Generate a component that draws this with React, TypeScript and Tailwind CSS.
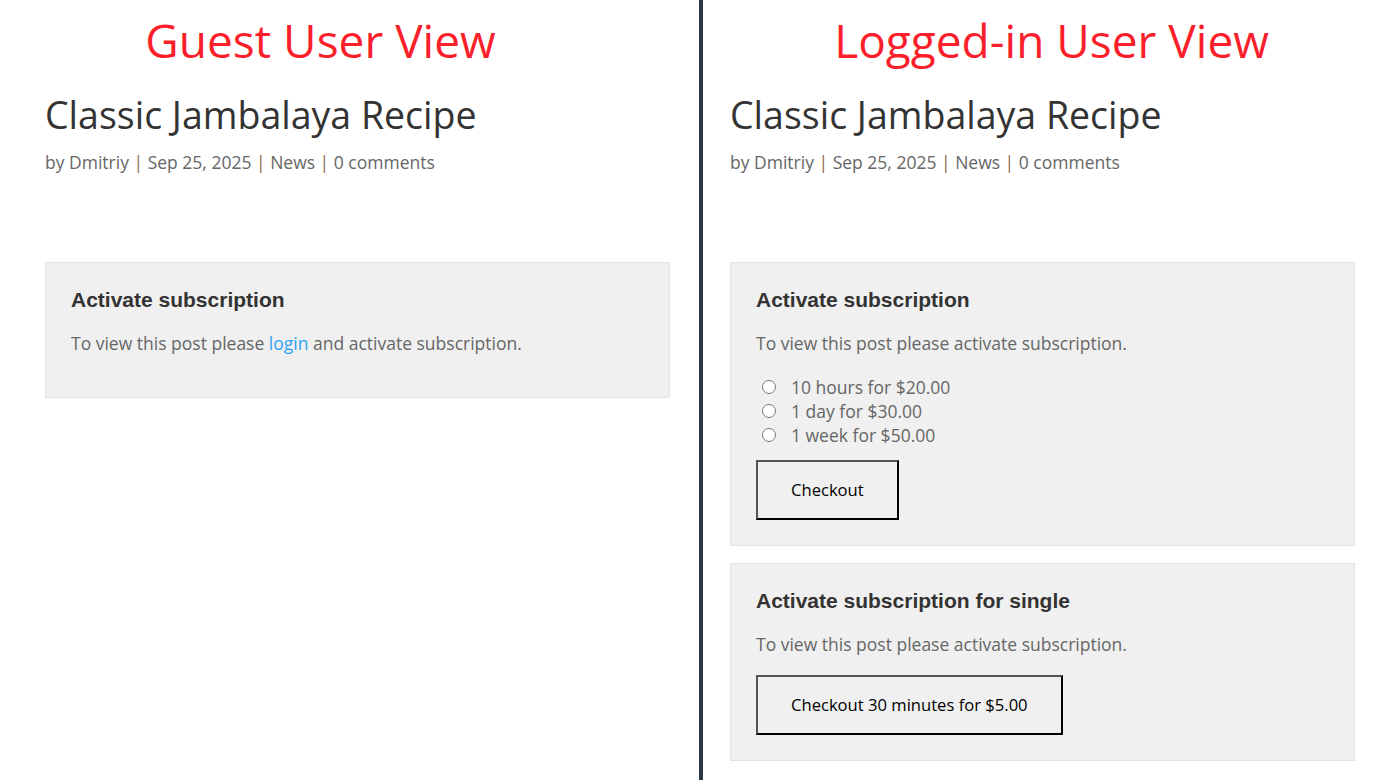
import type {ReactNode} from 'react';

const sans = "font-['Open_Sans',sans-serif]";
const arial = "font-['Liberation_Sans',Arial,sans-serif]";

function PostHeader() {
  return (
    <div>
      <h1 className={`${sans} mt-[18px] text-[37.5px] leading-[54px] font-normal text-[#333]`}>Classic Jambalaya Recipe</h1>
      <p className={`${sans} mt-[7px] text-[17.5px] leading-[27px] text-[#666]`}>
        by Dmitriy <span className="text-[#8a6a55]">|</span> Sep 25, 2025 <span className="text-[#8a6a55]">|</span> News{' '}
        <span className="text-[#8a6a55]">|</span> 0 comments
      </p>
    </div>
  );
}

function Box({title, children}: {title: string; children: ReactNode}) {
  return (
    <section className="w-[625px] border border-[#e3e3e3] bg-[#f0f0f0] p-[25px]">
      <h3 className={`${arial} text-[21px] leading-[24px] font-bold text-[#333]`}>{title}</h3>
      <div className={`${sans} mt-[18px] text-[17.5px] leading-[27px] text-[#666]`}>{children}</div>
    </section>
  );
}

function CheckoutButton({label}: {label: string}) {
  return (
    <button
      type="button"
      className={`${sans} border-2 border-t-[#555] border-l-[#555] border-r-black border-b-black bg-transparent px-[33px] py-[16px] text-[16.6px] leading-[24px] text-black`}
    >
      {label}
    </button>
  );
}

const plans = ['10 hours for $20.00', '1 day for $30.00', '1 week for $50.00'];

export default function App() {
  return (
    <main className="flex h-[780px] w-[1400px] overflow-hidden bg-white">
      <div className="w-[699px] pl-[45px]">
        <h2 className={`${sans} pr-[103px] pt-[10px] text-center text-[46px] leading-[60px] text-[#fb1f2c]`}>Guest User View</h2>
        <PostHeader />
        <div className="mt-[86px]">
          <Box title="Activate subscription">
            <p className="mb-[15px]">
              To view this post please <a className="text-[#2ea3f2]">login</a> and activate subscription.
            </p>
          </Box>
        </div>
      </div>

      <div className="w-[4px] bg-[#2d3748]" />

      <div className="flex-1 pl-[27px]">
        <h2 className={`${sans} pr-[27px] pt-[10px] text-center text-[46px] leading-[60px] text-[#fb1f2c]`}>Logged-in User View</h2>
        <PostHeader />
        <div className="mt-[86px] flex flex-col gap-[17px]">
          <Box title="Activate subscription">
            <p>To view this post please activate subscription.</p>
            <div className="mt-[18px] flex flex-col">
              {plans.map((plan) => (
                <label key={plan} className="flex h-[24px] items-center leading-[24px]">
                  <input type="radio" name="plan" className="ml-[6px] mr-[15px] h-[14px] w-[14px]" />
                  {plan}
                </label>
              ))}
            </div>
            <div className="mt-[13px] flex">
              <CheckoutButton label="Checkout" />
            </div>
          </Box>
          <Box title="Activate subscription for single">
            <p>To view this post please activate subscription.</p>
            <div className="mt-[17px] flex">
              <CheckoutButton label="Checkout 30 minutes for $5.00" />
            </div>
          </Box>
        </div>
      </div>
    </main>
  );
}
